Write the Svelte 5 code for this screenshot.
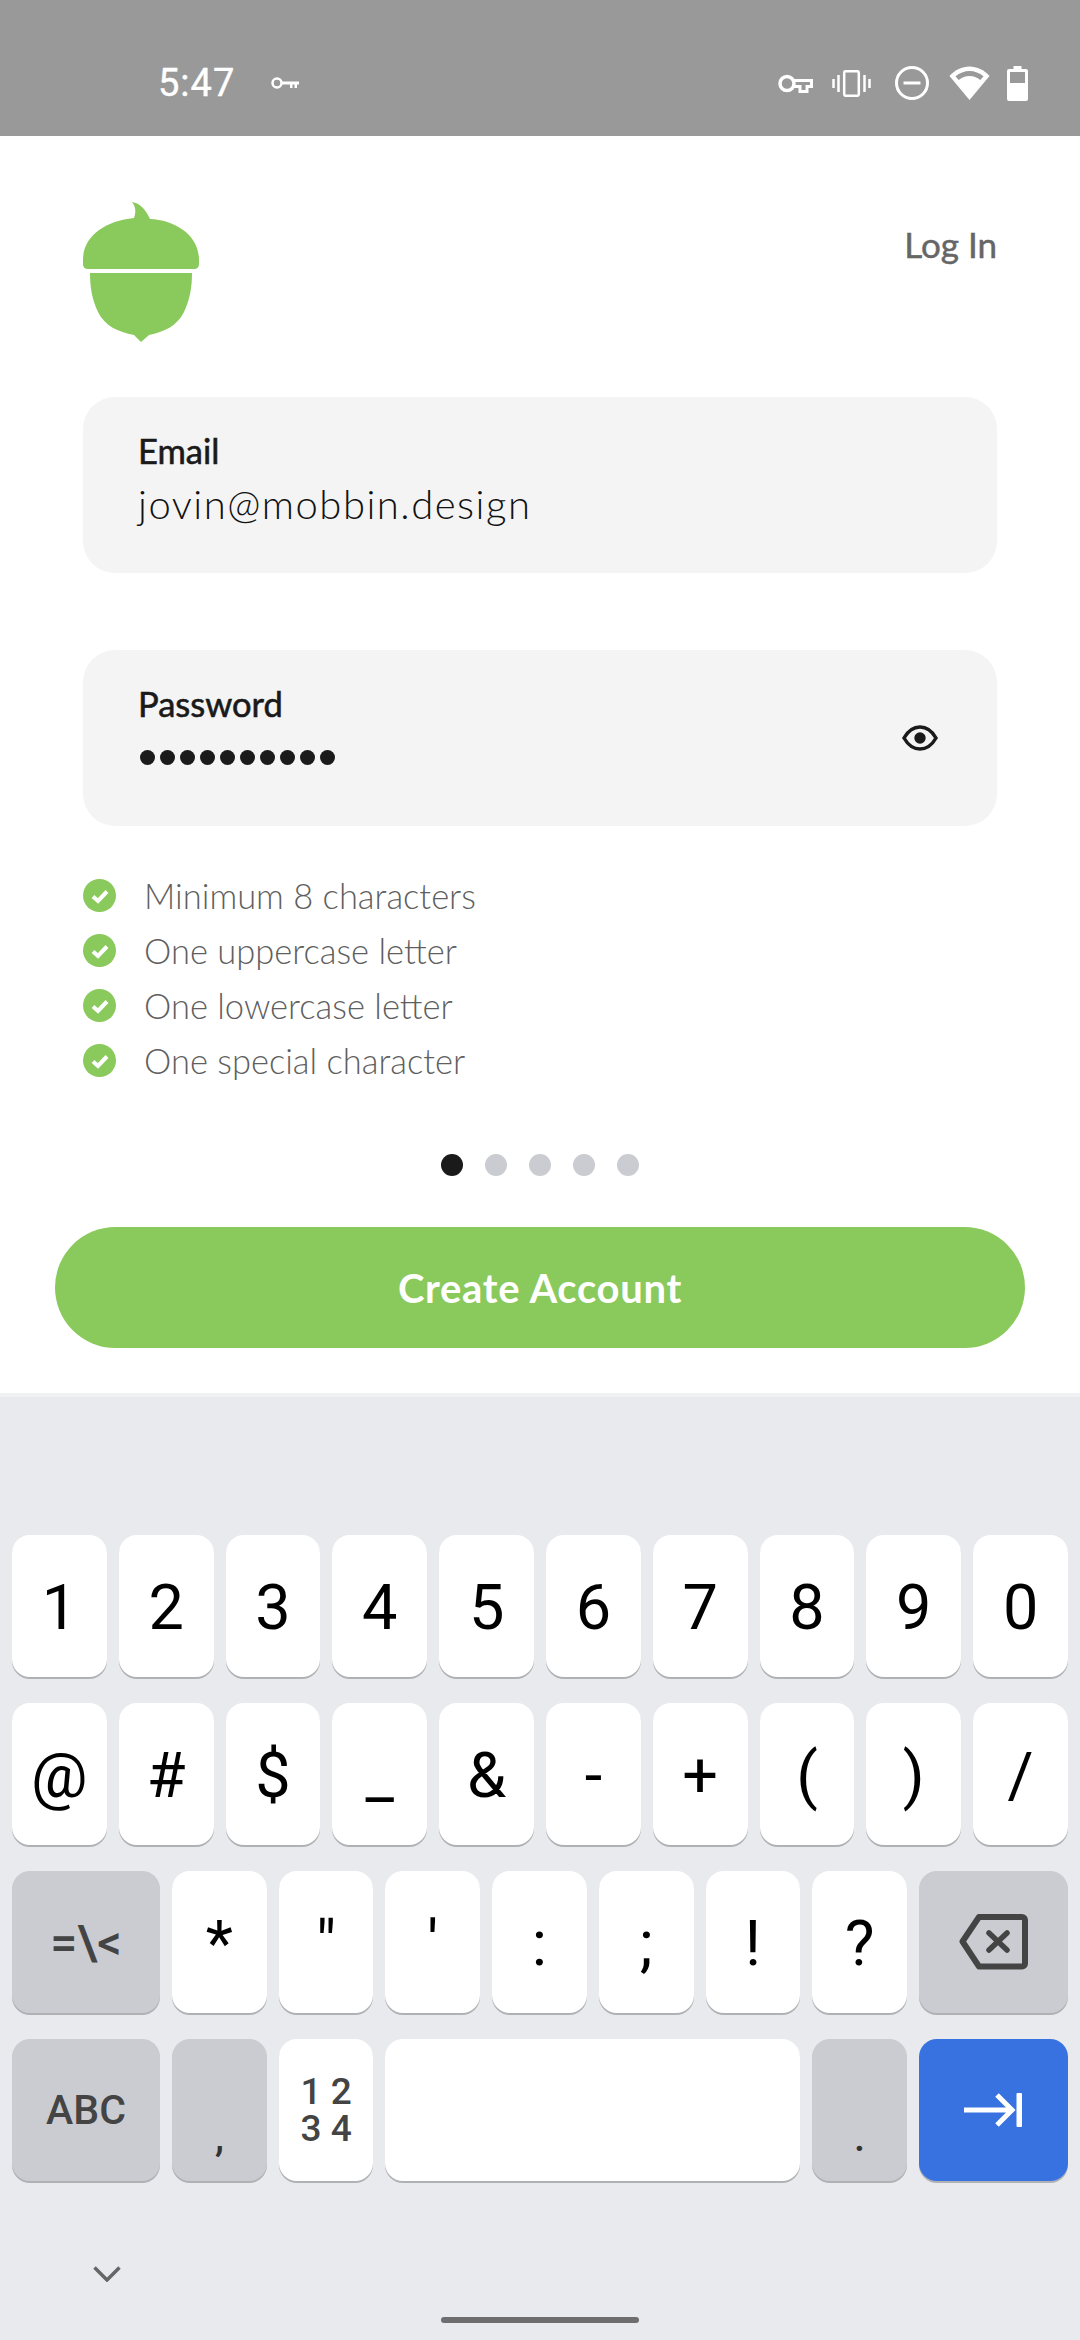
<script lang="ts">
	const rules = ['Minimum 8 characters', 'One uppercase letter', 'One lowercase letter', 'One special character'];
	const digits = ['1', '2', '3', '4', '5', '6', '7', '8', '9', '0'];
	const symbols = ['@', '#', '$', '_', '&', '-', '+', '(', ')', '/'];
	const punctuation = ['*', '"', "'", ':', ';', '!', '?'];
</script>

<div class="screen">
	<header class="status">
		<span class="time">5:47</span>
		<svg class="vpn" viewBox="0 0 28 14" width="28" height="14" aria-hidden="true">
			<circle cx="6" cy="7" r="4.500" fill="none" stroke="#fff" stroke-width="2.500" />
			<path d="M10 5.500h18v3h-2v3.500h-2.500v-3.500h-2v3.500H19V8.500h-9z" fill="#fff" />
		</svg>
		<div class="status-right">
			<svg class="i-key" viewBox="0 0 35 19" width="35" height="19" aria-hidden="true">
				<circle cx="9" cy="9.500" r="7" fill="none" stroke="#fff" stroke-width="3.500" />
				<path d="M16 6.500h17.500v6H29v5h-7v-5h-6" fill="none" stroke="#fff" stroke-width="3" />
			</svg>
			<svg class="i-vib" viewBox="0 0 39 27" width="39" height="27" aria-hidden="true">
				<rect x="12.200" y="1.200" width="14.600" height="24.600" rx="1.500" fill="none" stroke="#fff" stroke-width="2.500" />
				<path d="M6.500 5v17M1.500 9v9M32.500 5v17M37.500 9v9" stroke="#fff" stroke-width="2.500" fill="none" />
			</svg>
			<svg class="i-dnd" viewBox="0 0 34 34" width="34" height="34" aria-hidden="true">
				<circle cx="17" cy="17" r="15.500" fill="none" stroke="#fff" stroke-width="3" />
				<rect x="8.500" y="15.500" width="17" height="3" fill="#fff" />
			</svg>
			<svg class="i-wifi" viewBox="0 0 41 34" width="41" height="34" aria-hidden="true">
				<path d="M20.500 34 0.500 10C6 4 13 0.500 20.500 0.500S35 4 40.500 10z" fill="#fff" />
				<path d="M6.500 10.200C10.500 7 15.500 5 20.500 5s10 2 14 5.200l-3.200 3.800C28 11.500 24.500 10 20.500 10s-7.500 1.500-10.800 4z" fill="#999" />
			</svg>
			<svg class="i-bat" viewBox="0 0 21 35" width="21" height="35" aria-hidden="true">
				<path d="M6.500 0h8v3H19a2 2 0 0 1 2 2v28a2 2 0 0 1-2 2H2a2 2 0 0 1-2-2V5a2 2 0 0 1 2-2h4.500z" fill="#fff" />
				<rect x="3" y="6" width="15" height="11" fill="#999" />
			</svg>
		</div>
	</header>

	<main class="content">
		<div class="top-row">
			<svg class="logo" viewBox="0 0 116 140" width="116" height="140" aria-hidden="true">
				<path d="M49 0C57 1 63 8 67 17C92 18 116 33 116 58V62Q116 67 111 67H5Q0 67 0 62V58C0 34 22 19 51 16C53 10 53 5 49 0z" fill="#8ac95c" />
				<path d="M7 71H109C109 85 107 97 101 110C94 124 81 130 66 133L58 140L51 133C35 130 22 124 15 110C9 97 7 85 7 71z" fill="#8ac95c" />
			</svg>
			<span class="login">Log In</span>
		</div>

		<div class="field first">
			<div class="field-text">
				<span class="label">Email</span>
				<span class="value">jovin@mobbin.design</span>
			</div>
		</div>

		<div class="field">
			<div class="field-text">
				<span class="label">Password</span>
				<div class="dots-value">
					{#each Array(10) as _}
						<i></i>
					{/each}
				</div>
			</div>
			<svg class="eye" viewBox="0 0 36 26" width="36" height="26" aria-hidden="true">
				<path d="M2 13C6 6 11.500 2 18 2S30 6 34 13c-4 7-9.500 11-16 11S6 20 2 13z" fill="none" stroke="#1a1a1a" stroke-width="3.500" />
				<circle cx="18" cy="13" r="5.700" fill="#1a1a1a" />
			</svg>
		</div>

		<ul class="rules">
			{#each rules as rule}
				<li>
					<svg viewBox="0 0 33 33" width="33" height="33" aria-hidden="true">
						<circle cx="16.500" cy="16.500" r="16.500" fill="#8ac95c" />
						<path d="M10 17.500l5 4.500 9-9.500" fill="none" stroke="#fff" stroke-width="4" />
					</svg>
					<span>{rule}</span>
				</li>
			{/each}
		</ul>

		<div class="pager">
			{#each Array(5) as _, i}
				<i class:active={i === 0}></i>
			{/each}
		</div>

		<button class="cta">Create Account</button>
	</main>

	<section class="keyboard">
		<div class="row ten">
			{#each digits as key}
				<div class="key digit">{key}</div>
			{/each}
		</div>
		<div class="row ten">
			{#each symbols as key}
				<div class="key digit">{key}</div>
			{/each}
		</div>
		<div class="row nine">
			<div class="key fn symbols">=\&lt;</div>
			{#each punctuation as key}
				<div class="key digit">{key}</div>
			{/each}
			<div class="key fn">
				<svg viewBox="0 0 70 56" width="70" height="56" aria-hidden="true">
					<path d="M20 3h43a3 3 0 0 1 3 3v43.500a3 3 0 0 1-3 3H20L3.500 27.500z" fill="none" stroke="#444" stroke-width="6" stroke-linejoin="round" />
					<path d="M30 19l18 17M48 19L30 36" stroke="#444" stroke-width="5.500" stroke-linecap="round" fill="none" />
				</svg>
			</div>
		</div>
		<div class="row nine">
			<div class="key fn abc">ABC</div>
			<div class="key fn low">,</div>
			<div class="key numpad"><span>1 2 3 4</span></div>
			<div class="key space"></div>
			<div class="key fn low">.</div>
			<div class="key enter">
				<svg viewBox="0 0 58 36" width="58" height="36" aria-hidden="true">
					<path d="M0 18h47M33 3l15 15-15 15" fill="none" stroke="#fff" stroke-width="5" />
					<rect x="52.500" y="1" width="5.500" height="34" rx="1" fill="#fff" />
				</svg>
			</div>
		</div>
		<svg class="chevron" viewBox="0 0 28 16" width="28" height="16" aria-hidden="true">
			<path d="M1.500 1.500L14 14 26.500 1.500" fill="none" stroke="#666" stroke-width="3.500" />
		</svg>
		<div class="home-bar"></div>
	</section>
</div>

<style>
	:global(body) {
		margin: 0;
		background: #fff;
	}

	.screen {
		width: 1080px;
		height: 2340px;
		display: flex;
		flex-direction: column;
		font-family: Lato, 'Noto Sans', sans-serif;
		overflow: hidden;
	}

	.status {
		height: 136px;
		box-sizing: border-box;
		background: #999;
		color: #fff;
		display: flex;
		align-items: center;
		padding: 30px 52px 0 158px;
	}

	.time {
		font: 400 38px Roboto, sans-serif;
		letter-spacing: 1px;
		-webkit-text-stroke: 0.4px #fff;
	}

	.vpn {
		margin-left: 36px;
	}

	.status-right {
		margin-left: auto;
		display: flex;
		align-items: center;
	}

	.i-vib {
		margin-left: 19px;
	}

	.i-dnd {
		margin-left: 24px;
	}

	.i-wifi {
		margin-left: 20px;
	}

	.i-bat {
		margin-left: 17px;
	}

	.content {
		height: 1257px;
		box-sizing: border-box;
		padding: 66px 83px 0;
		background: #fff;
	}

	.top-row {
		display: flex;
		justify-content: space-between;
		align-items: flex-start;
		height: 195px;
	}

	.logo {
		display: block;
	}

	.login {
		margin-top: 21px;
		font-size: 35px;
		color: #666;
		-webkit-text-stroke: 0.5px #666;
	}

	.field {
		height: 176px;
		margin-top: 77px;
		box-sizing: border-box;
		padding: 0 55px;
		border-radius: 32px;
		background: #f4f4f4;
		display: flex;
		align-items: center;
		justify-content: space-between;
	}

	.field.first {
		margin-top: 0;
	}

	.field-text {
		display: flex;
		flex-direction: column;
		padding-bottom: 12px;
	}

	.label {
		font-size: 34.500px;
		line-height: 44px;
		color: #1a1a1a;
		-webkit-text-stroke: 0.6px #1a1a1a;
	}

	.value {
		margin-top: 6px;
		font-size: 40px;
		font-weight: 300;
		line-height: 50px;
		letter-spacing: 1.500px;
		color: #111;
	}

	.dots-value {
		margin-top: 6px;
		height: 50px;
		display: flex;
		align-items: center;
		gap: 5px;
		padding-left: 2px;
	}

	.dots-value i {
		width: 15px;
		height: 15px;
		border-radius: 50%;
		background: #1a1a1a;
	}

	.eye {
		margin-right: 4px;
	}

	.rules {
		list-style: none;
		margin: 42px 0 0;
		padding: 0;
	}

	.rules li {
		height: 55px;
		display: flex;
		align-items: center;
		gap: 28px;
		font-size: 34.500px;
		font-weight: 300;
		color: #5f5f5f;
	}

	.pager {
		margin-top: 66px;
		display: flex;
		justify-content: center;
		gap: 22px;
	}

	.pager i {
		width: 22px;
		height: 22px;
		border-radius: 50%;
		background: #cbccd1;
	}

	.pager i.active {
		background: #1a1a1a;
	}

	.cta {
		display: block;
		width: 970px;
		height: 121px;
		margin: 51px 0 0 -28px;
		border: 0;
		border-radius: 61px;
		background: #8ac95c;
		color: #fff;
		font-family: inherit;
		font-size: 40px;
		font-weight: 700;
		letter-spacing: 0.700px;
	}

	.keyboard {
		flex: 1;
		position: relative;
		background: #e8eaed;
		border-top: 4px solid #f0f1f3;
		padding: 138px 12px 0;
		display: flex;
		flex-direction: column;
		gap: 26px;
		font-family: Roboto, sans-serif;
	}

	.row {
		display: grid;
		gap: 12px;
		height: 142px;
	}

	.ten {
		grid-template-columns: repeat(10, 1fr);
	}

	.nine {
		grid-template-columns: 148px repeat(7, 1fr) 149px;
	}

	.key {
		display: flex;
		align-items: center;
		justify-content: center;
		border-radius: 18px;
		background: #fff;
		box-shadow: 0 2px 0 #b0b1b5;
		color: #000;
	}

	.digit {
		box-sizing: border-box;
		padding-top: 2px;
		font-size: 63px;
	}

	.fn {
		background: #cbccd1;
		color: #444;
	}

	.symbols {
		font-size: 48px;
		font-weight: 500;
	}

	.abc {
		font-size: 41px;
		font-weight: 500;
	}

	.low {
		align-items: flex-end;
		padding-bottom: 20px;
		box-sizing: border-box;
		font-size: 40px;
		font-weight: 500;
		color: #333;
	}

	.numpad {
		font-size: 37px;
		font-weight: 500;
		line-height: 37px;
		text-align: center;
		color: #444;
	}

	.numpad span {
		width: 60px;
	}

	.space {
		grid-column: span 4;
	}

	.enter {
		background: #3871e0;
	}

	.chevron {
		position: absolute;
		left: 93px;
		top: 869px;
	}

	.home-bar {
		position: absolute;
		left: 441px;
		top: 920px;
		width: 198px;
		height: 6px;
		border-radius: 3px;
		background: #6e6e6e;
	}
</style>
